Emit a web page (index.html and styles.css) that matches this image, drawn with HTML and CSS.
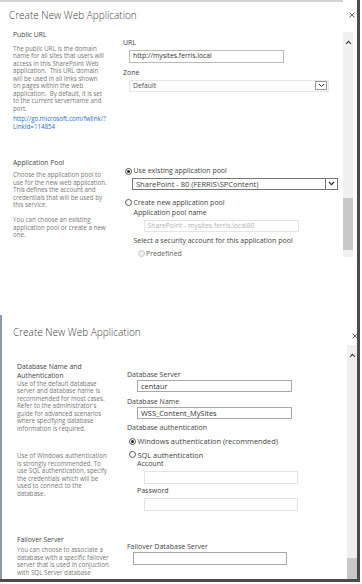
FILE: index.html
```html
<!DOCTYPE html>
<html lang="en">
<head>
  <meta charset="UTF-8" />
  <meta name="viewport" content="width=device-width, initial-scale=1.0"/>
  <title>Create New Web Application</title>
  <link rel="stylesheet" href="styles.css">
</head>
<body>
  <div class="frame">

    <!-- first capture: public url + application pool -->
    <div class="dialog dialog-top">
      <div class="dlg-head">
        <h1 class="dlg-title">Create New Web Application</h1>
        <svg class="dlg-close" width="6" height="6" viewBox="0 0 6 6"><path d="M0.5 0.5 L5.5 5.5 M5.5 0.5 L0.5 5.5" stroke="#555" stroke-width="0.9" fill="none"/></svg>
      </div>
      <div class="dlg-body">
        <div class="dlg-content">

          <div class="section sec-url">
            <div class="sec-info">
              <h2 class="sec-title">Public URL</h2>
              <p class="sec-desc">The public URL is the domain<br>name for all sites that users will<br>access in this SharePoint Web<br>application.&nbsp; This URL domain<br>will be used in all links shown<br>on pages within the web<br>application.&nbsp; By default, it is set<br>to the current servername and<br>port.</p>
              <a class="sec-link" href="#">http://go.microsoft.com/fwlink/?<br>LinkId=114854</a>
            </div>
            <div class="sec-fields">
              <div class="lbl lbl-url">URL</div>
              <div class="textbox tb-url">http://mysites.ferris.local</div>
              <div class="lbl lbl-zone">Zone</div>
              <div class="select sel-zone">
                <span class="sel-text">Default</span>
                <span class="sel-arrow"><svg width="7" height="5" viewBox="0 0 7 5"><path d="M1 1 L3.5 3.6 L6 1" stroke="#333" stroke-width="1" fill="none"/></svg></span>
              </div>
            </div>
          </div>

          <div class="section sec-pool">
            <div class="sec-info">
              <h2 class="sec-title">Application Pool</h2>
              <p class="sec-desc">Choose the application pool to<br>use for the new web application.<br>This defines the account and<br>credentials that will be used by<br>this service.</p>
              <p class="sec-desc sec-desc-2">You can choose an existing<br>application pool or create a new<br>one.</p>
            </div>
            <div class="sec-fields fields-pool">
              <div class="radio-row rr-existing"><span class="radio checked"></span>Use existing application pool</div>
              <div class="select sel-pool">
                <span class="sel-text">SharePoint - 80 (FERRIS\SPContent)</span>
                <span class="sel-arrow"><svg width="7" height="5" viewBox="0 0 7 5"><path d="M1 1 L3.5 3.6 L6 1" stroke="#222" stroke-width="1.1" fill="none"/></svg></span>
              </div>
              <div class="radio-row rr-new"><span class="radio"></span>Create new application pool</div>
              <div class="sub">
                <div class="lbl lbl-poolname">Application pool name</div>
                <div class="textbox disabled tb-poolname">SharePoint - mysites.ferris.local80</div>
                <div class="lbl lbl-security">Select a security account for this application pool</div>
                <div class="radio-row rr-predef"><span class="radio disabled"></span>Predefined</div>
              </div>
            </div>
          </div>

        </div>
        <div class="scrollbar sb-top">
          <svg class="sb-up" width="7" height="5" viewBox="0 0 7 5"><path d="M1 4 L3.5 1.3 L6 4" stroke="#333" stroke-width="1.1" fill="none"/></svg>
          <div class="sb-thumb"></div>
        </div>
      </div>
    </div>

    <!-- second capture: database settings -->
    <div class="dialog dialog-bottom">
      <div class="dlg-head">
        <h1 class="dlg-title">Create New Web Application</h1>
        <svg class="dlg-close" width="6" height="6" viewBox="0 0 6 6"><path d="M0.5 0.5 L5.5 5.5 M5.5 0.5 L0.5 5.5" stroke="#555" stroke-width="0.9" fill="none"/></svg>
      </div>
      <div class="dlg-body">
        <div class="dlg-content">

          <div class="section sec-db">
            <div class="sec-info">
              <h2 class="sec-title">Database Name and<br>Authentication</h2>
              <p class="sec-desc">Use of the default database<br>server and database name is<br>recommended for most cases.<br>Refer to the administrator's<br>guide for advanced scenarios<br>where specifying database<br>information is required.</p>
              <p class="sec-desc sec-desc-win">Use of Windows authentication<br>is strongly recommended. To<br>use SQL authentication, specify<br>the credentials which will be<br>used to connect to the<br>database.</p>
            </div>
            <div class="sec-fields">
              <div class="lbl lbl-dbserver">Database Server</div>
              <div class="textbox tb-db">centaur</div>
              <div class="lbl lbl-dbname">Database Name</div>
              <div class="textbox tb-db">WSS_Content_MySites</div>
              <div class="lbl lbl-dbauth">Database authentication</div>
              <div class="radio-row rr-win"><span class="radio checked"></span>Windows authentication (recommended)</div>
              <div class="radio-row rr-sql"><span class="radio"></span>SQL authentication</div>
              <div class="sub sub-sql">
                <div class="lbl lbl-account">Account</div>
                <div class="textbox disabled tb-cred"></div>
                <div class="lbl lbl-pass">Password</div>
                <div class="textbox disabled tb-cred"></div>
              </div>
            </div>
          </div>

          <div class="section sec-failover">
            <div class="sec-info">
              <h2 class="sec-title">Failover Server</h2>
              <p class="sec-desc">You can choose to associate a<br>database with a specific failover<br>server that is used in conjuction<br>with SQL Server database</p>
            </div>
            <div class="sec-fields">
              <div class="lbl lbl-failover">Failover Database Server</div>
              <div class="textbox tb-failover"></div>
            </div>
          </div>

        </div>
        <div class="scrollbar sb-bottom">
          <svg class="sb-up" width="7" height="5" viewBox="0 0 7 5"><path d="M1 4 L3.5 1.3 L6 4" stroke="#333" stroke-width="1.1" fill="none"/></svg>
          <div class="sb-thumb"></div>
        </div>
      </div>
    </div>

  </div>
</body>
</html>
```
FILE: styles.css
```css
* {
  box-sizing: border-box;
}

body {
  margin: 0;
  background-color: #fff;
  font-family: "Open Sans", "Noto Sans", sans-serif;
  color: #444;
}

h1, h2, p {
  margin: 0;
  font-weight: normal;
}

.frame {
  width: 360px;
  height: 582px;
  border-right: 3px solid #4b4b4b;
  border-bottom: 3px solid #4b4b4b;
  display: flex;
  flex-direction: column;
  overflow: hidden;
}

.dialog {
  display: flex;
  flex-direction: column;
  overflow: hidden;
}

.dialog-top {
  height: 258px;
}

.dialog-bottom {
  margin-top: 57px;
  height: 264px;
  border-left: 2px solid #8a9ab0;
}

.dlg-head {
  display: flex;
  align-items: flex-start;
  justify-content: space-between;
  flex-shrink: 0;
}

.dialog-top .dlg-head {
  height: 28px;
  border-top: 2px solid #d2d5d8;
  margin-right: 14px;
  padding-left: 9px;
  padding-top: 6px;
}

.dialog-bottom .dlg-head {
  height: 30px;
  padding-left: 11px;
  padding-top: 10px;
}

.dlg-title {
  font-size: 10px;
  font-weight: 300;
  line-height: 14px;
  color: #3c3c3c;
}

.dlg-close {
  margin-top: 4px;
}

.dialog-top .dlg-close {
  margin-right: -12px;
}

.dialog-bottom .dlg-close {
  margin-right: -1px;
  margin-top: 8px;
}

.dlg-body {
  flex: 1;
  display: flex;
  min-height: 0;
}

.dlg-content {
  flex: 1;
  min-width: 0;
  overflow: hidden;
}

.dialog-top .dlg-body {
  padding-right: 4px;
}

/* scrollbars */
.scrollbar {
  width: 10px;
  background-color: #f0f0f0;
  display: flex;
  flex-direction: column;
  align-items: center;
}

.sb-top {
  margin-top: 4px;
  margin-bottom: 1px;
}

.sb-up {
  margin-top: 8px;
  flex-shrink: 0;
}

.sb-thumb {
  width: 10px;
  background-color: #c8c8c8;
}

.sb-top .sb-thumb {
  margin-top: 153px;
  height: 52px;
}

.sb-bottom .sb-thumb {
  margin-top: 200px;
  height: 21px;
}

/* sections */
.section {
  display: grid;
  grid-template-columns: 110px 1fr;
}

.dialog-top .section {
  padding-left: 13px;
}

.dialog-bottom .section {
  padding-left: 15px;
}

.sec-url {
  height: 131px;
  padding-top: 3px;
}

.sec-title {
  font-size: 6.8px;
  line-height: 8px;
  color: #444;
}

.sec-desc {
  font-size: 6.2px;
  line-height: 7.5px;
  color: #777;
  white-space: nowrap;
}

.sec-url .sec-desc {
  margin-top: 5.5px;
}

.sec-link {
  display: block;
  margin-top: 2.5px;
  font-size: 6.2px;
  line-height: 8px;
  color: #1a6fc2;
  text-decoration: none;
}

.sec-pool .sec-desc {
  margin-top: 4.25px;
}

.sec-pool .sec-desc-2 {
  margin-top: 7.5px;
}

/* fields */
.lbl {
  font-size: 7px;
  line-height: 8px;
  color: #444;
  white-space: nowrap;
}

.lbl-url {
  margin-top: 8px;
}

.textbox {
  height: 12.5px;
  border: 1px solid #b9b9b9;
  background-color: #fff;
  font-size: 6.8px;
  line-height: 10.5px;
  padding-left: 3px;
  color: #333;
  white-space: nowrap;
  overflow: hidden;
}

.textbox.disabled {
  border-color: #e4e4e4;
  color: #b4b4b4;
}

.tb-url {
  margin-top: 3px;
  margin-left: 6px;
  width: 155px;
}

.lbl-zone {
  margin-top: 6px;
}

.select {
  display: flex;
  align-items: center;
  justify-content: space-between;
  font-size: 6.8px;
  color: #555;
  white-space: nowrap;
}

.sel-zone {
  margin-top: 3px;
  margin-left: 6px;
  width: 200px;
  height: 12px;
  border: 1px solid #e6e6e6;
  background-color: #fcfcfc;
  padding-left: 3px;
  padding-right: 1px;
}

.sel-arrow {
  width: 12px;
  height: 9px;
  border: 1px solid #9a9a9a;
  display: flex;
  align-items: center;
  justify-content: center;
  background-color: #fff;
}

.fields-pool {
  padding-left: 2px;
}

.radio-row {
  display: flex;
  align-items: center;
  font-size: 7px;
  line-height: 8px;
  color: #444;
  white-space: nowrap;
}

.radio {
  width: 7px;
  height: 7px;
  border-radius: 50%;
  border: 1px solid #555;
  background-color: #fff;
  margin-right: 1.5px;
  flex-shrink: 0;
  display: flex;
  align-items: center;
  justify-content: center;
}

.radio.checked::after {
  content: "";
  width: 3px;
  height: 3px;
  border-radius: 50%;
  background-color: #222;
}

.radio.disabled {
  border-color: #c6c6c6;
  background-color: #f0f0f0;
}

.rr-existing {
  margin-top: 8px;
}

.sel-pool {
  margin-top: 3px;
  margin-left: 7px;
  width: 206px;
  height: 11.5px;
  border: 1px solid #777;
  background-color: #fff;
  padding-left: 3px;
  color: #444;
  font-size: 7.5px;
}

.sel-pool .sel-arrow {
  height: 9.5px;
  border: none;
  border-left: 1px solid #777;
}

.rr-new {
  margin-top: 9px;
}

.sub {
  padding-left: 8.5px;
}

.lbl-poolname {
  margin-top: 2px;
}

.tb-poolname {
  margin-top: 3px;
  margin-left: 10px;
  width: 155px;
}

.lbl-security {
  margin-top: 4.5px;
}

.rr-predef {
  margin-top: 5px;
  margin-left: 4px;
  color: #666;
}

/* database capture */
.sec-db {
  padding-top: 17px;
  height: 190.5px;
}

.sec-db .sec-title {
  line-height: 9px;
}

.sec-db .sec-desc {
  margin-top: -0.5px;
}

.sec-db .sec-desc-win {
  margin-top: 20.25px;
}

.lbl-dbserver {
  margin-top: 8.5px;
}

.tb-db {
  margin-top: 1px;
  margin-left: 10px;
  width: 155px;
  height: 12px;
  border-color: #a8a8a8;
  line-height: 10px;
  font-size: 7.4px;
}

.lbl-dbname {
  margin-top: 6px;
}

.lbl-dbauth {
  margin-top: 5.5px;
}

.rr-win,
.rr-sql {
  margin-top: 5px;
  margin-left: 2px;
  font-size: 7.4px;
}

.rr-sql {
  margin-top: 5.5px;
}

.sub-sql {
  padding-left: 10px;
}

.lbl-account {
  margin-top: 1.5px;
}

.tb-cred {
  margin-top: 3px;
  margin-left: 7px;
  width: 154px;
  height: 13px;
}

.lbl-pass {
  margin-top: 2.5px;
}

.sub-sql .tb-cred:last-child {
  margin-top: 3.5px;
}

.sec-failover .sec-desc {
  margin-top: 2.5px;
}

.lbl-failover {
  margin-top: 7px;
}

.tb-failover {
  margin-top: 1.5px;
  margin-left: 6px;
  width: 154px;
  height: 13px;
  border-color: #a8a8a8;
}
```
